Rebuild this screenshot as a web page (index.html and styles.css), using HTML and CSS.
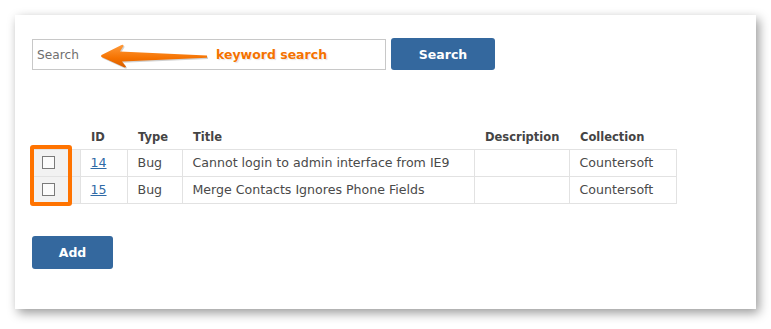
FILE: index.html
```html
<!DOCTYPE html>
<html>
<head>
<meta charset="utf-8">
<link rel="stylesheet" href="styles.css">
</head>
<body>
<div class="page">
  <div class="card">
    <div class="search-row">
      <div class="search-wrap">
        <input class="search-input" type="text" placeholder="Search">
        <svg class="arrow" width="114" height="28" viewBox="98 42 114 28">
          <defs>
            <linearGradient id="ag" x1="0" y1="0" x2="0" y2="1">
              <stop offset="0" stop-color="#ff9a3a"/>
              <stop offset="0.6" stop-color="#f57200"/>
              <stop offset="1" stop-color="#d85e00"/>
            </linearGradient>
          </defs>
          <path d="M207 55.6 L207 57.8 L122 61.5 L126 66.5 Q125.5 68 123.5 67 L101.5 57 Q100.5 56 101.5 55 L121.5 45 Q123.5 44 123.5 46 L120 51.5 Z" fill="#000" opacity="0.18" transform="translate(1 1.2)"/>
          <path d="M207 55.6 L207 57.8 L122 61.5 L126 66.5 Q125.5 68 123.5 67 L101.5 57 Q100.5 56 101.5 55 L121.5 45 Q123.5 44 123.5 46 L120 51.5 Z" fill="url(#ag)"/>
        </svg>
        <span class="note">keyword search</span>
      </div>
      <button class="btn btn-search">Search</button>
    </div>

    <div class="table-wrap">
      <table class="grid">
        <colgroup>
          <col class="c-cb"><col class="c-id"><col class="c-type"><col class="c-title"><col class="c-desc"><col class="c-coll">
        </colgroup>
        <thead>
          <tr>
            <th></th><th>ID</th><th>Type</th><th>Title</th><th>Description</th><th>Collection</th>
          </tr>
        </thead>
        <tbody>
          <tr>
            <td class="cb"><span class="box"></span></td>
            <td><a href="#">14</a></td>
            <td>Bug</td>
            <td>Cannot login to admin interface from IE9</td>
            <td></td>
            <td>Countersoft</td>
          </tr>
          <tr>
            <td class="cb"><span class="box"></span></td>
            <td><a href="#">15</a></td>
            <td>Bug</td>
            <td>Merge Contacts Ignores Phone Fields</td>
            <td></td>
            <td>Countersoft</td>
          </tr>
        </tbody>
      </table>
      <div class="highlight"></div>
    </div>

    <button class="btn btn-add">Add</button>
  </div>
</div>
</body>
</html>
```

FILE: styles.css
```css
html, body {
  margin: 0;
  padding: 0;
  background: #ffffff;
}

.page {
  padding: 15px;
}

.card {
  width: 741px;
  height: 294px;
  box-sizing: border-box;
  background: #ffffff;
  box-shadow: 3px 4px 10px rgba(0, 0, 0, 0.4);
  padding: 23px 17px 0 17px;
  font-family: "DejaVu Sans", Verdana, sans-serif;
}

.search-row {
  display: flex;
  align-items: flex-end;
  gap: 5px;
}

.search-wrap {
  position: relative;
  width: 354px;
  height: 31px;
}

.search-input {
  box-sizing: border-box;
  width: 354px;
  height: 31px;
  margin: 0;
  border: 1px solid #c8c8c8;
  padding: 0 0 0 4px;
  font-family: "DejaVu Sans", Verdana, sans-serif;
  font-size: 12.2px;
  color: #555;
  outline: none;
  display: block;
}

.search-input::placeholder {
  color: #6f6f6f;
}

.arrow {
  position: absolute;
  left: 66px;
  top: 3px;
}

.note {
  position: absolute;
  left: 184px;
  top: 8px;
  font-size: 12.5px;
  font-weight: bold;
  color: #f47200;
  white-space: nowrap;
  text-shadow: 0 0 2px #fff, 0 0 2px #fff, 1px 1px 1px rgba(0,0,0,0.15);
}

.btn {
  border: none;
  border-radius: 3px;
  background: #34689e;
  color: #ffffff;
  font-family: "DejaVu Sans", Verdana, sans-serif;
  font-weight: bold;
  font-size: 12.5px;
  padding: 0;
  margin: 0;
  cursor: pointer;
}

.btn-search {
  width: 104px;
  height: 32px;
}

.table-wrap {
  position: relative;
  margin-top: 53px;
  margin-left: 1px;
  width: 643px;
}

.grid {
  border-collapse: collapse;
  table-layout: fixed;
  width: 643px;
  font-size: 12.6px;
  color: #4a4a4a;
}

.c-cb { width: 47px; }
.c-id { width: 47px; }
.c-type { width: 55px; }
.c-title { width: 292px; }
.c-desc { width: 95px; }
.c-coll { width: 107px; }

.grid th {
  height: 26px;
  padding: 2px 0 0 11px;
  box-sizing: border-box;
  text-align: left;
  font-size: 11.5px;
  font-weight: bold;
  color: #444;
  border-bottom: 1px solid #e2e2e2;
}

.grid td {
  height: 26px;
  padding: 0 0 0 10px;
  border: 1px solid #e2e2e2;
  white-space: nowrap;
}

.grid td.cb {
  background: #f2f2f2;
  border-left: none;
  padding-left: 9px;
}

.box {
  display: block;
  width: 11px;
  height: 11px;
  border: 1px solid #7a7a7a;
  background: #fbfbfb;
}

.grid a {
  color: #2f6aa6;
  text-decoration: underline;
}

.highlight {
  position: absolute;
  left: -3px;
  top: 22px;
  width: 34px;
  height: 53px;
  border: 4px solid #ff7300;
  border-radius: 3px;
}

.btn-add {
  display: block;
  margin-top: 32px;
  width: 81px;
  height: 33px;
}
```
